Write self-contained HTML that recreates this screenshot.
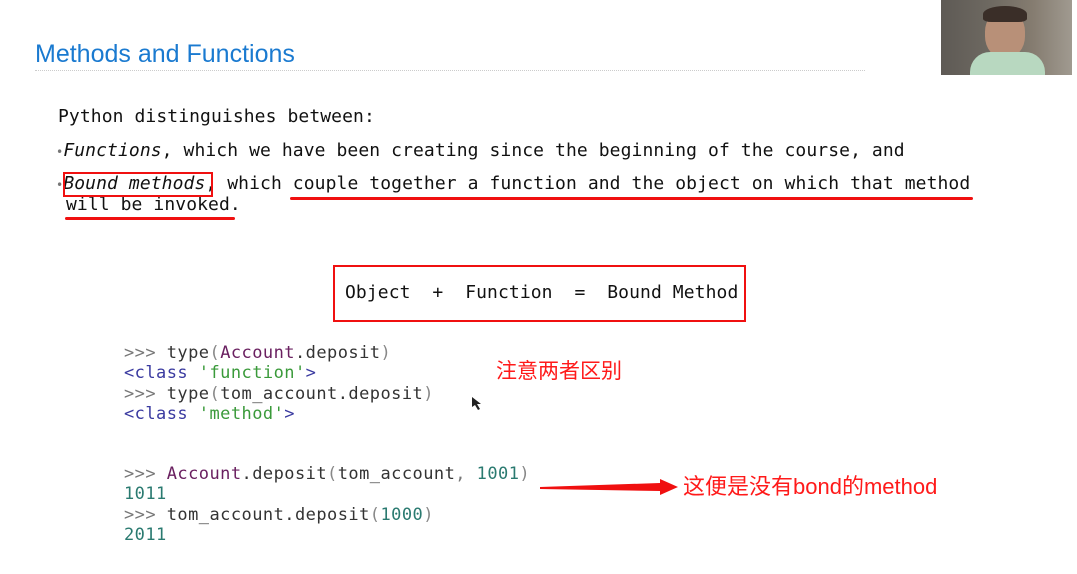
<!DOCTYPE html>
<html><head><meta charset="utf-8"><style>
body{margin:0;width:1077px;height:574px;background:#fff;position:relative;overflow:hidden;font-family:"DejaVu Sans Mono","Liberation Mono",monospace}
.a{position:absolute;white-space:pre;line-height:1}
.t{font-size:18px;color:#111;letter-spacing:0.09px}
.c{font-size:17px;color:#333;letter-spacing:0.45px}
.g{color:#777}.p{color:#6a2060}.n{color:#2a7a70}.s{color:#3a9a3a}.k{color:#3a3aa0}.y{color:#888}
.r{position:absolute;border:2px solid #f01010}
.u{position:absolute;height:3px;background:#f01010;border-radius:2px}
.cj{font-family:"Liberation Sans","Noto Sans CJK SC",sans-serif;color:#ff1a1a}
</style></head><body>
<div class="a" style="left:35px;top:42px;font-family:'Liberation Sans',sans-serif;font-size:25px;color:#1a7ad0">Methods and Functions</div>
<div style="position:absolute;left:35px;top:70px;width:830px;border-top:1px dotted #ccc"></div>
<div style="position:absolute;left:941px;top:0;width:131px;height:75px;background:linear-gradient(90deg,#5e5a55,#6f6a62 40%,#857c70 70%,#a09a90)"></div>
<div style="position:absolute;left:985px;top:10px;width:40px;height:48px;border-radius:45%;background:#b89078"></div>
<div style="position:absolute;left:983px;top:6px;width:44px;height:16px;border-radius:50% 50% 20% 20%;background:#3a2e28"></div>
<div style="position:absolute;left:970px;top:52px;width:75px;height:23px;border-radius:20px 20px 0 0;background:#b8d8c0"></div>
<div class="a t" style="left:58px;top:108px">Python distinguishes between:</div>
<div class="a t" style="left:56px;top:142px"><span class="g" style="font-size:12px">•</span><i>Functions</i>, which we have been creating since the beginning of the course, and</div>
<div class="a t" style="left:56px;top:175px"><span class="g" style="font-size:12px">•</span><i>Bound methods</i>, which couple together a function and the object on which that method</div>
<div class="a t" style="left:66px;top:196px">will be invoked.</div>
<div class="r" style="left:63px;top:172px;width:146px;height:21px"></div>
<div class="u" style="left:290px;top:197px;width:683px"></div>
<div class="u" style="left:65px;top:217px;width:170px"></div>
<div class="r" style="left:333px;top:265px;width:409px;height:53px"></div>
<div class="a t" style="left:345px;top:284px">Object  +  Function  =  Bound Method</div>
<div class="a c" style="left:124px;top:343px;line-height:20.3px"><span class="g">&gt;&gt;&gt;</span> type<span class="y">(</span><span class="p">Account</span>.deposit<span class="y">)</span>
<span class="k">&lt;class</span> <span class="s">'function'</span><span class="k">&gt;</span>
<span class="g">&gt;&gt;&gt;</span> type<span class="y">(</span>tom_account.deposit<span class="y">)</span>
<span class="k">&lt;class</span> <span class="s">'method'</span><span class="k">&gt;</span></div>
<div class="a c" style="left:124px;top:464px;line-height:20.3px"><span class="g">&gt;&gt;&gt;</span> <span class="p">Account</span>.deposit<span class="y">(</span>tom_account<span class="g">,</span> <span class="n">1001</span><span class="y">)</span>
<span class="n">1011</span>
<span class="g">&gt;&gt;&gt;</span> tom_account.deposit<span class="y">(</span><span class="n">1000</span><span class="y">)</span>
<span class="n">2011</span></div>
<div class="a cj" style="left:496px;top:361px;font-size:21px">注意两者区别</div>
<div class="a cj" style="left:683px;top:476px;font-size:22px">这便是没有bond的method</div>
<svg style="position:absolute;left:540px;top:478px" width="140" height="20"><polygon points="0,9 120,5 120,1 138,9 120,17 120,13 0,11" fill="#f01010"/></svg>
<svg style="position:absolute;left:472px;top:397px" width="10" height="14"><polygon points="0,0 0,10 3,8 6,13 8,12 5,7 9,7" fill="#222"/></svg>
</body></html>
